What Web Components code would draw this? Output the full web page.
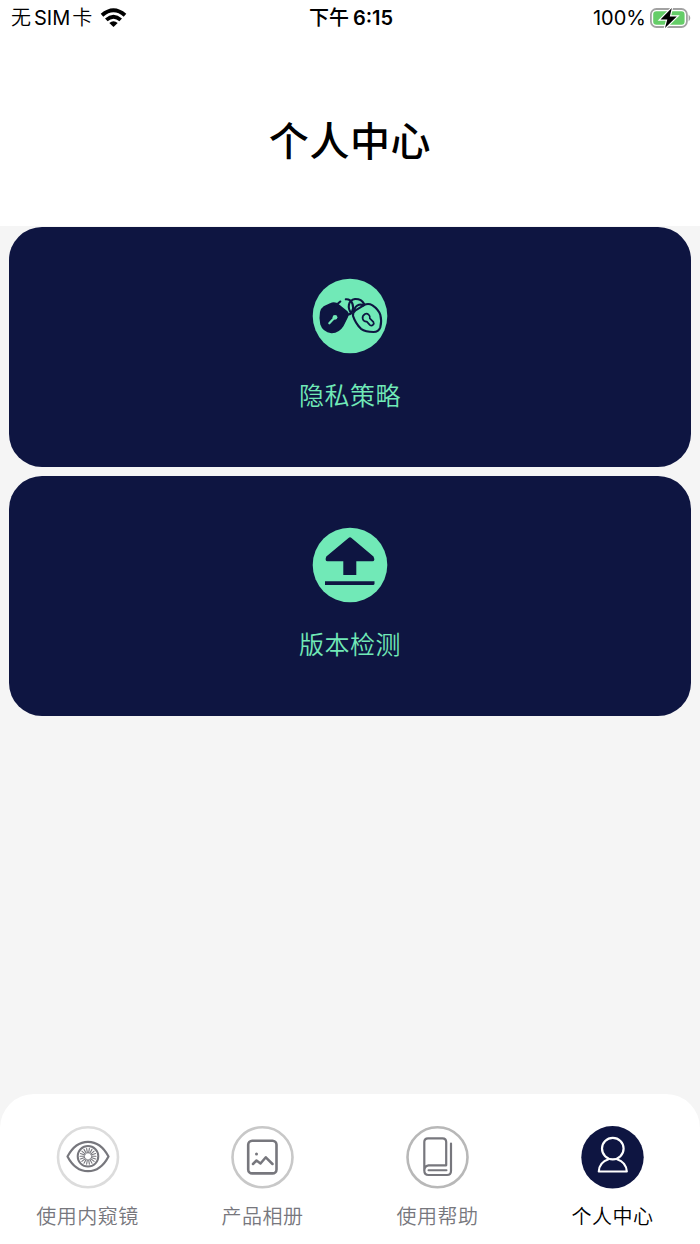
<!DOCTYPE html>
<html lang="zh-CN">
<head>
<meta charset="UTF-8">
<title>个人中心</title>
<style>
  html, body {
    margin: 0;
    height: 100%;
    overflow: hidden;
    font-family: Inter, "Noto Sans CJK SC", sans-serif;
  }
  body {
    --navy: #0e1541;
    --mint: #71e9b7;
    --page: #f5f5f5;
  }
</style>
</head>
<body>
<profile-page>
  <status-bar slot="status"></status-bar>
  <page-title slot="title">个人中心</page-title>
  <menu-card icon="locks">隐私策略</menu-card>
  <menu-card icon="upload">版本检测</menu-card>
  <tab-bar slot="tabs">
    <tab-item icon="eye">使用内窥镜</tab-item>
    <tab-item icon="album">产品相册</tab-item>
    <tab-item icon="book">使用帮助</tab-item>
    <tab-item icon="person" active>个人中心</tab-item>
  </tab-bar>
</profile-page>

<script>
const cardIcons = {
  locks: `
    <svg viewBox="7 7.7 76 76">
      <circle cx="45" cy="45.7" r="37.3" fill="#71e9b7"/>
      <g fill="none" stroke="#0e1541" stroke-width="2.100" stroke-linecap="round" stroke-linejoin="round">
        <path d="M19 37L25.500 33.800Q30 32 33.500 35L41.500 41.500Q43.500 43.500 42 46.500L37.500 55.500Q33.500 62 26.500 61.800Q18.500 61 16.300 54Q14.800 48.500 16 42Q16.800 38.300 19 37Z" fill="#0e1541"/>
        <path d="M30.500 35.500L35.300 31.200M40.800 29C47.500 28.500 49.500 36.500 47 41.500Q45.800 44 43 44.300"/>
        <path d="M46.500 43C42 38 43 30 50 28.700Q56.500 28.500 59 33.500M48.800 41Q50 35.500 54 34.500Q56.500 34 58.500 35"/>
        <path d="M50.500 40L59.500 34.500Q63.500 32.700 67.500 35Q73.500 39 75.300 44.500Q77 51 75.300 57Q73.500 61.700 68.500 61.700Q60.500 61.500 56 58.500Q50.500 53 48 45.500Q47.500 42 50.500 40Z"/>
        <path d="M60 43.700C62.500 42.500 65.500 45 64.800 48L68.300 51.500C69.800 54 67 56.300 65 54.800L61.800 51.300C57.500 51.500 55.800 46.300 60 43.700Z" stroke-width="1.700"/>
      </g>
      <path d="M29.500 47.500L24.300 53" stroke="#71e9b7" stroke-width="2.200" stroke-linecap="round"/>
      <circle cx="30" cy="47" r="2.400" fill="#71e9b7"/>
    </svg>`,
  upload: `
    <svg viewBox="7 7 76 76">
      <circle cx="45" cy="45" r="37.3" fill="#71e9b7"/>
      <path d="M43.500 18Q45 16.500 46.500 18L68.500 36.500Q70.500 41.300 67.500 41.300H51.300V55H38.300V41.300H22.500Q19.500 41 21.300 36.500Z" fill="#0e1541"/>
      <path d="M20 61.300H69.500V63.500Q69.500 65 68 65H20Z" fill="#0e1541"/>
    </svg>`,
}

// short strokes radiating around the pupil
const irisRays = (radii, count) =>
  Array.from({ length: count }, (_, i) => {
    const a = (i * 2 * Math.PI) / count
    const [r1, r2] = radii
    return `M${32 + r1 * Math.cos(a)} ${31.3 + r1 * Math.sin(a)}L${32 + r2 * Math.cos(a)} ${31.3 + r2 * Math.sin(a)}`
  }).join('')

const tabIcons = {
  eye: `
    <circle cx="32" cy="32.300" r="30" stroke="#dcdcdc" stroke-width="2.600"/>
    <path d="M11.500 31.500C17 21 24 16.800 32 16.800S47 21 52.500 31.500C47 42 40 46.200 32 46.200S17 42 11.500 31.500Z" stroke-width="2.200"/>
    <circle cx="32" cy="31.300" r="10.300" stroke-width="2"/>
    <path d="${irisRays([3.5, 8], 18)}" stroke-width="1.100"/>`,
  album: `
    <circle cx="31.500" cy="32.300" r="30" stroke="#c8c8c8" stroke-width="2.600"/>
    <rect x="17.200" y="15.700" width="28.300" height="32.700" rx="4" stroke-width="2.600"/>
    <path d="M22 39L25.500 35.500L29.500 38.500L34.800 32.300L41.500 39" stroke-width="2.500"/>
    <circle cx="25.500" cy="29" r="1.500" fill="#77777d" stroke="none"/>`,
  book: `
    <circle cx="31.500" cy="32.300" r="30" stroke="#b8b8b8" stroke-width="2.600"/>
    <path d="M18.300 45.500V17Q18.300 13.300 22 13.300H36.500Q40.200 13.300 40.200 17V40.300H22.500Q18.300 41 18.300 45.500Q18.300 50 22.500 50H41Q45 50 45 46V18.500" stroke-width="2.200"/>
    <path d="M22.500 45.300H40.500" stroke-width="2"/>`,
  person: `
    <circle cx="31.500" cy="32.300" r="31.200" fill="#0e1541" stroke="none"/>
    <circle cx="31.800" cy="23.600" r="10.800" stroke-width="2.200"/>
    <path d="M27.500 34.200C21.500 36 18 41 17.800 46.500H45.800C45.500 41 42 36 36 34.200" stroke-width="2.200"/>`,
}

class ProfilePage extends HTMLElement {
  constructor() {
    super()
    this.attachShadow({ mode: 'open' }).innerHTML = `
      <style>
        :host {
          display: flex;
          flex-direction: column;
          height: 100%;
          background: var(--page);
        }
        header {
          display: flex;
          flex-direction: column;
          height: 226px;
          background: #fff;
        }
        main {
          flex: 1;
          display: flex;
          flex-direction: column;
          gap: 9px;
          padding: .6px 9px 0;
        }
      </style>
      <header>
        <slot name="status"></slot>
        <slot name="title"></slot>
      </header>
      <main><slot></slot></main>
      <slot name="tabs"></slot>
    `
  }
}

class StatusBar extends HTMLElement {
  constructor() {
    super()
    this.attachShadow({ mode: 'open' }).innerHTML = `
      <style>
        :host {
          display: grid;
          grid-template-columns: 1fr auto 1fr;
          align-items: center;
          height: 35px;
          padding: 0 8px 0 11px;
          font-size: 20px;
          line-height: 35px;
          color: #000;
        }
        div {
          display: flex;
          align-items: center;
          white-space: nowrap;
        }
        span { padding-top: 1px; }
        .carrier { gap: 8px; }
        .carrier > span { font-weight: 350; }
        .latin { margin: 0 2px 0 3px; font-weight: 400; }
        .time { font-weight: 500; padding-right: 1px; }
        .time .clock { margin-left: 4px; font-weight: 600; }
        .power { justify-content: flex-end; gap: 4px; }
        svg { display: block; margin-top: -1px; }
      </style>
      <div class="carrier">
        <span>无<span class="latin">SIM</span>卡</span>
        <svg width="27" height="19" viewBox="0 0 27 19" fill="none" stroke="#000" stroke-width="3.900">
          <path d="M2 7.200Q13.500 -2.800 25 7.200M6.300 11.900Q13.500 5.600 20.700 11.900"/>
          <path d="M9.300 15Q13.500 11.500 17.700 15L13.500 19Z" fill="#000" stroke="none"/>
        </svg>
      </div>
      <div class="time"><span>下午</span><span class="clock">6:15</span></div>
      <div class="power">
        <span>100%</span>
        <svg width="42" height="22" viewBox="0 0 42 22">
          <rect x=".900" y="2" width="36" height="18" rx="5.500" fill="none" stroke="#a2a2a2" stroke-width="1.800"/>
          <rect x="3.200" y="4.300" width="31.400" height="13.400" rx="3.200" fill="#65cd68"/>
          <path d="M38.600 7.500Q42 11 38.600 14.500Z" fill="#a2a2a2"/>
          <path d="M21.800 1L10.500 12.500H17.300L15 21L26.800 9.500H19.800Z" fill="#000" stroke="#fff" stroke-width="2.400" paint-order="stroke"/>
        </svg>
      </div>
    `
  }
}

class PageTitle extends HTMLElement {
  constructor() {
    super()
    this.attachShadow({ mode: 'open' }).innerHTML = `
      <style>
        :host {
          flex: 1;
          display: flex;
          justify-content: center;
          align-items: center;
          font-size: 40px;
          font-weight: 500;
          line-height: 60px;
          letter-spacing: .6px;
          color: #000;
        }
        h1 {
          margin: 22px 0 0;
          font: inherit;
        }
      </style>
      <h1><slot></slot></h1>
    `
  }
}

class MenuCard extends HTMLElement {
  constructor() {
    super()
    this.attachShadow({ mode: 'open' })
  }

  connectedCallback() {
    this.shadowRoot.innerHTML = `
      <style>
        :host {
          display: flex;
          flex-direction: column;
          align-items: center;
          gap: 21px;
          height: 240px;
          padding-top: 51px;
          box-sizing: border-box;
          border-radius: 33px;
          background: var(--navy);
          color: var(--mint);
          font-family: "Noto Sans CJK SC", sans-serif;
          font-size: 25px;
          font-weight: 350;
          line-height: 38px;
          letter-spacing: .5px;
        }
        svg {
          display: block;
          width: 76px;
          height: 76px;
        }
      </style>
      ${cardIcons[this.getAttribute('icon')]}
      <span><slot></slot></span>
    `
  }
}

class TabBar extends HTMLElement {
  constructor() {
    super()
    this.attachShadow({ mode: 'open' }).innerHTML = `
      <style>
        :host {
          display: grid;
          grid-template-columns: repeat(4, 1fr);
          height: 150px;
          border-radius: 34px 34px 0 0;
          background: #fff;
        }
      </style>
      <slot></slot>
    `
  }
}

class TabItem extends HTMLElement {
  constructor() {
    super()
    this.attachShadow({ mode: 'open' })
  }

  connectedCallback() {
    const stroke = this.hasAttribute('active') ? '#fff' : '#77777d'
    this.shadowRoot.innerHTML = `
      <style>
        :host {
          display: flex;
          flex-direction: column;
          align-items: center;
          gap: 12px;
          padding-top: 31px;
          font-family: "Noto Sans CJK SC", sans-serif;
          font-size: 20px;
          font-weight: 350;
          line-height: 30px;
          letter-spacing: .5px;
          color: #77777d;
        }
        :host([active]) { color: #000; }
        svg {
          display: block;
          width: 64px;
          height: 64px;
        }
      </style>
      <svg viewBox="0 0 64 64" fill="none" stroke="${stroke}" stroke-linecap="round" stroke-linejoin="round">
        ${tabIcons[this.getAttribute('icon')]}
      </svg>
      <span><slot></slot></span>
    `
  }
}

customElements.define('profile-page', ProfilePage)
customElements.define('status-bar', StatusBar)
customElements.define('page-title', PageTitle)
customElements.define('menu-card', MenuCard)
customElements.define('tab-bar', TabBar)
customElements.define('tab-item', TabItem)
</script>
</body>
</html>
